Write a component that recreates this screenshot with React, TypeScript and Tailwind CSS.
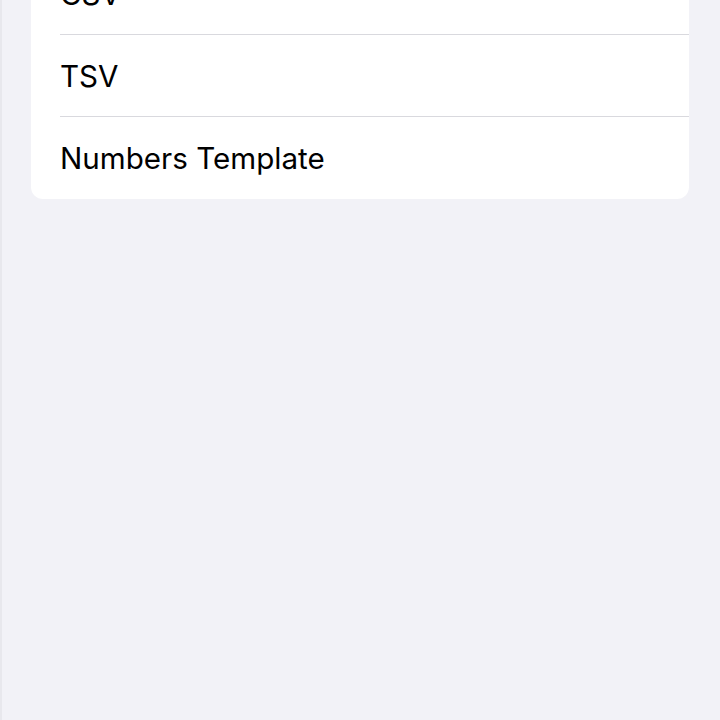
const rows = ['CSV', 'TSV', 'Numbers Template'];

export default function App() {
  return (
    <div
      className="h-[720px] w-[720px] overflow-hidden bg-[#f2f2f7] border-l-2 border-[#e8e8ed]"
      style={{ fontFamily: 'Inter, "Noto Sans", sans-serif' }}
    >
      <div className="mt-[-47px] ml-[29px] mr-[31px] rounded-[12px] bg-white">
        {rows.map((label, i) => (
          <div key={label} className="pl-[29px]">
            <div
              className={
                'flex h-[82px] items-center pt-[2px] text-[29.6px] leading-none text-black ' +
                (i < rows.length - 1 ? 'border-b border-[#d9d9de]' : '')
              }
            >
              {label}
            </div>
          </div>
        ))}
      </div>
    </div>
  );
}
